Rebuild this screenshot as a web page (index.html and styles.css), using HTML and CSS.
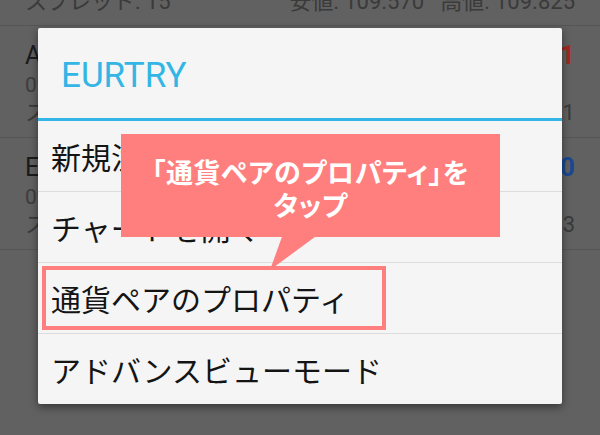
FILE: index.html
```html
<!DOCTYPE html>
<html lang="ja">
<head>
<meta charset="utf-8">
<title>EURTRY</title>
<link rel="stylesheet" href="styles.css">
</head>
<body>
<div class="screen">
  <div class="list">
    <div class="row row-first">
      <div class="line line-name"><span class="name">USDJPY</span><span class="price down">109.781</span></div>
      <div class="line line-time"><span>09:59:58</span><span></span></div>
      <div class="line line-info"><span>スプレッド: 15</span><span class="range"><span>安値: 109.570</span><span>高値: 109.825</span></span></div>
    </div>
    <div class="row">
      <div class="line line-name"><span class="name">AUDJPY</span><span class="price down">82.561</span></div>
      <div class="line line-time"><span>09:59:58</span><span></span></div>
      <div class="line line-info"><span>スプレッド: 21</span><span class="range"><span>安値: 82.342</span><span>高値: 82.831</span></span></div>
    </div>
    <div class="row">
      <div class="line line-name"><span class="name">EURJPY</span><span class="price up">130.420</span></div>
      <div class="line line-time"><span>09:59:57</span><span></span></div>
      <div class="line line-info"><span>スプレッド: 17</span><span class="range"><span>安値: 130.102</span><span>高値: 130.693</span></span></div>
    </div>
  </div>

  <div class="dialog">
    <div class="dialog-title">EURTRY</div>
    <div class="menu">
      <div class="menu-item">新規注文</div>
      <div class="menu-item">チャートを開く</div>
      <div class="menu-item">通貨ペアのプロパティ<span class="highlight"></span></div>
      <div class="menu-item">アドバンスビューモード</div>
    </div>
  </div>

  <div class="callout">
    「通貨ペアのプロパティ」を<br>タップ
    <svg class="tail" width="60" height="40" viewBox="0 0 60 40"><polygon points="22,0 58,0 9,36" fill="#ff7f7f"/></svg>
  </div>
</div>
</body>
</html>
```

FILE: styles.css
```css
html, body {
  margin: 0;
  padding: 0;
  background: #616161;
}

.screen {
  position: relative;
  width: 600px;
  height: 435px;
  overflow: hidden;
  background: #616161;
  font-family: Roboto, "Noto Sans CJK JP", sans-serif;
}

.list {
  margin-top: -85px;
}

.row {
  padding: 13px 25px 16px;
  border-bottom: 1px solid #555555;
}

.row-first {
  padding-bottom: 15px;
}

.line {
  display: flex;
  justify-content: space-between;
  align-items: center;
  white-space: nowrap;
}

.line-name {
  height: 32px;
  font-size: 25px;
  color: #1b1b1b;
}

.line-time {
  height: 28px;
  font-size: 21px;
  color: #3d3d3d;
}

.line-info {
  height: 22px;
  font-size: 22px;
  color: #3a3a3a;
}

.range {
  display: flex;
  gap: 16px;
}

.price {
  font-size: 26px;
  font-weight: 700;
}

.price.down {
  color: #a3261f;
}

.price.up {
  color: #1a4893;
}

.dialog {
  position: absolute;
  left: 38px;
  top: 28px;
  width: 524px;
  background: #f5f5f5;
  border-radius: 2px;
  box-shadow: 0 3px 8px rgba(0, 0, 0, 0.45);
}

.dialog-title {
  height: 93px;
  box-sizing: border-box;
  padding: 5px 0 0 23px;
  display: flex;
  align-items: center;
  font-family: Roboto, sans-serif;
  font-size: 35px;
  color: #33b5e5;
  border-bottom: 3px solid #33b5e5;
}

.menu-item {
  position: relative;
  height: 70px;
  display: flex;
  align-items: center;
  padding-left: 13px;
  font-family: "Noto Sans CJK JP", sans-serif;
  font-size: 30px;
  color: #141414;
  border-bottom: 1px solid #dcdcdc;
  white-space: nowrap;
}

.menu-item:last-child {
  border-bottom: none;
}

.highlight {
  position: absolute;
  left: 4px;
  top: 3px;
  width: 344px;
  height: 64px;
  box-sizing: border-box;
  border: 4px solid #ff7f7f;
}

.callout {
  position: absolute;
  left: 121px;
  top: 134px;
  width: 379px;
  height: 103px;
  box-sizing: border-box;
  padding-top: 21px;
  background: #ff7f7f;
  color: #ffffff;
  font-family: "Noto Sans CJK JP", sans-serif;
  font-size: 27px;
  font-weight: 700;
  font-feature-settings: "palt";
  letter-spacing: 0.6px;
  line-height: 33px;
  text-align: center;
  white-space: nowrap;
}

.tail {
  position: absolute;
  left: 140px;
  top: 100px;
  display: block;
}
```
